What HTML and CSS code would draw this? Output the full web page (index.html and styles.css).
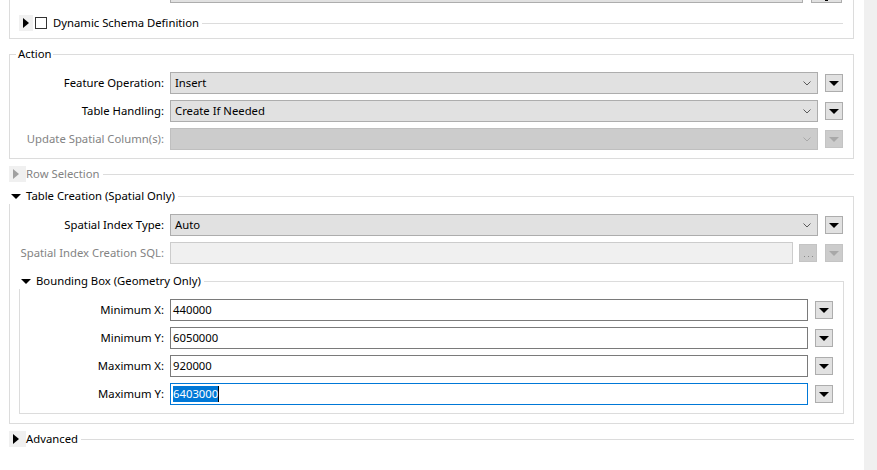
FILE: index.html
```html
<!DOCTYPE html>
<html>
<head>
<meta charset="utf-8">
<link rel="stylesheet" href="styles.css">
</head>
<body>
<div class="page">
  <div class="main">
    <div class="topbox">
      <div class="row top-row">
        <div class="lbl"></div>
        <div class="combo"></div>
        <div class="wide-btn"><span class="dot"></span></div>
      </div>
      <div class="header top-header">
        <span class="toggle small collapsed"><span class="tri-right"></span></span>
        <span class="checkbox"></span>
        <span class="htext">Dynamic Schema Definition</span>
        <span class="hline"></span>
      </div>
    </div>

    <fieldset class="group action">
      <legend class="plain-legend">Action</legend>
      <div class="body action-body">
        <div class="row">
          <div class="lbl">Feature Operation:</div>
          <div class="combo"><span class="ctext">Insert</span><svg class="chev" width="8" height="5" viewBox="0 0 8 5"><path d="M0.5 0.5 L4 4 L7.5 0.5" fill="none" stroke="#5a5a5a" stroke-width="1"/></svg></div>
          <div class="ddbtn"><span class="tri-down"></span></div>
        </div>
        <div class="row">
          <div class="lbl">Table Handling:</div>
          <div class="combo"><span class="ctext">Create If Needed</span><svg class="chev" width="8" height="5" viewBox="0 0 8 5"><path d="M0.5 0.5 L4 4 L7.5 0.5" fill="none" stroke="#5a5a5a" stroke-width="1"/></svg></div>
          <div class="ddbtn"><span class="tri-down"></span></div>
        </div>
        <div class="row">
          <div class="lbl disabled">Update Spatial Column(s):</div>
          <div class="combo combo-disabled"><span class="ctext"></span><svg class="chev" width="8" height="5" viewBox="0 0 8 5"><path d="M0.5 0.5 L4 4 L7.5 0.5" fill="none" stroke="#a8a8a8" stroke-width="1"/></svg></div>
          <div class="ddbtn ddbtn-disabled"><span class="tri-down"></span></div>
        </div>
      </div>
    </fieldset>

    <div class="header section-header">
      <span class="toggle collapsed"><span class="tri-right tri-gray"></span></span>
      <span class="htext disabled">Row Selection</span>
      <span class="hline"></span>
    </div>

    <fieldset class="group tc">
      <legend class="toggle-legend">
        <span class="toggle expanded"><span class="tri-down"></span></span>
        <span class="htext">Table Creation (Spatial Only)</span>
      </legend>
      <div class="body tc-body">
        <div class="row">
          <div class="lbl">Spatial Index Type:</div>
          <div class="combo"><span class="ctext">Auto</span><svg class="chev" width="8" height="5" viewBox="0 0 8 5"><path d="M0.5 0.5 L4 4 L7.5 0.5" fill="none" stroke="#5a5a5a" stroke-width="1"/></svg></div>
          <div class="ddbtn"><span class="tri-down"></span></div>
        </div>
        <div class="row">
          <div class="lbl disabled">Spatial Index Creation SQL:</div>
          <div class="field field-disabled"></div>
          <div class="dotsbtn"><span class="dots"></span></div>
          <div class="ddbtn ddbtn-disabled sql-dd"><span class="tri-down"></span></div>
        </div>

        <fieldset class="group bbox">
          <legend class="toggle-legend">
            <span class="toggle expanded"><span class="tri-down"></span></span>
            <span class="htext">Bounding Box (Geometry Only)</span>
          </legend>
          <div class="body bbox-body">
            <div class="row">
              <div class="lbl bl">Minimum X:</div>
              <div class="field"><span class="ftext">440000</span></div>
              <div class="ddbtn"><span class="tri-down"></span></div>
            </div>
            <div class="row">
              <div class="lbl bl">Minimum Y:</div>
              <div class="field"><span class="ftext">6050000</span></div>
              <div class="ddbtn"><span class="tri-down"></span></div>
            </div>
            <div class="row">
              <div class="lbl bl">Maximum X:</div>
              <div class="field"><span class="ftext">920000</span></div>
              <div class="ddbtn"><span class="tri-down"></span></div>
            </div>
            <div class="row">
              <div class="lbl bl">Maximum Y:</div>
              <div class="field field-focus"><span class="ftext selected">6403000</span></div>
              <div class="ddbtn"><span class="tri-down"></span></div>
            </div>
          </div>
        </fieldset>
      </div>
    </fieldset>

    <div class="header section-header advanced">
      <span class="toggle collapsed"><span class="tri-right"></span></span>
      <span class="htext">Advanced</span>
      <span class="hline"></span>
    </div>
  </div>
  <div class="scrollbar"></div>
</div>
</body>
</html>
```

FILE: styles.css
```css
html, body {
  margin: 0;
  padding: 0;
  background: #ffffff;
}

body {
  font-family: "Noto Sans", "Open Sans", sans-serif;
  font-size: 11.3px;
  line-height: 16px;
  color: #000000;
}

.page {
  display: flex;
  width: 877px;
  height: 470px;
  overflow: hidden;
}

.main {
  width: 864px;
  box-sizing: border-box;
  padding: 0 10px 0 9px;
}

.scrollbar {
  width: 13px;
  background: #f0f0f0;
}

/* top partial group */
.topbox {
  border: 1px solid #dcdcdc;
  border-top: none;
  padding: 0 0 7px 0;
}

.top-row {
  margin-top: -19px;
  padding-right: 11px;
}

.top-row .combo {
  margin-right: 8px;
}

.wide-btn {
  width: 31px;
  height: 22px;
  box-sizing: border-box;
  background: #e1e1e1;
  border: 1px solid #adadad;
  display: flex;
  justify-content: center;
  align-items: flex-end;
}

.wide-btn .dot {
  width: 3px;
  height: 2px;
  background: #000;
  margin-bottom: 1px;
}

.top-header {
  margin-top: 12px;
  padding-left: 9px;
  padding-right: 10px;
}

/* headers */
.header {
  display: flex;
  align-items: center;
  height: 16px;
}

.htext {
  white-space: nowrap;
}

.hline {
  flex: 1;
  height: 1px;
  background: #dcdcdc;
  margin-left: 3px;
}

.section-header {
  margin-top: 7px;
}

.toggle {
  display: flex;
  align-items: center;
  height: 16px;
  width: 17px;
  box-sizing: border-box;
  flex: none;
}

.toggle.collapsed {
  background: #f0f0f0;
  padding-left: 4px;
}

.toggle.expanded {
  padding-left: 2px;
  background: #ffffff;
}

.toggle.small {
  width: 14px;
  margin-right: 2px;
}

.tri-right {
  width: 0;
  height: 0;
  border-top: 5px solid transparent;
  border-bottom: 5px solid transparent;
  border-left: 6px solid #000;
}

.tri-right.tri-gray {
  border-left-color: #a0a0a0;
}

.tri-down {
  width: 0;
  height: 0;
  border-left: 5px solid transparent;
  border-right: 5px solid transparent;
  border-top: 5px solid #000;
}

.checkbox {
  width: 12px;
  height: 12px;
  box-sizing: border-box;
  border: 1px solid #333333;
  background: #fff;
  margin-right: 6px;
  flex: none;
}

.disabled {
  color: #838383;
}

/* group boxes */
fieldset.group {
  margin: 0;
  padding: 0;
  border: 1px solid #dcdcdc;
  min-width: 0;
}

legend {
  padding: 0;
  line-height: 16px;
}

.plain-legend {
  margin-left: 6px;
  padding: 0 2px;
}

.toggle-legend {
  display: flex;
  align-items: center;
  margin-left: -1px;
  padding-right: 3px;
  background: #fff;
}

fieldset.action {
  margin-top: 7px;
}

.action-body {
  padding: 10px 10px 8px 0;
}

fieldset.tc {
  margin-top: 6px;
}

.tc-body {
  padding: 10px 10px 9px 0;
}

fieldset.bbox {
  margin: 3px -1px 0 9px;
}

.bbox-body {
  padding: 10px 10px 8px 0;
}

.body {
  display: flex;
  flex-direction: column;
  gap: 6px;
}

/* rows */
.row {
  display: flex;
  align-items: center;
  height: 22px;
}

.lbl {
  width: 154px;
  margin-right: 6px;
  text-align: right;
  white-space: nowrap;
  flex: none;
}

.lbl.bl {
  width: 144px;
}

.combo {
  flex: 1;
  height: 22px;
  box-sizing: border-box;
  background: #e1e1e1;
  border: 1px solid #adadad;
  display: flex;
  align-items: center;
  padding: 0 6px 0 4px;
}

.combo .ctext {
  flex: 1;
}

.combo-disabled {
  background: #cccccc;
  border-color: #bfbfbf;
}

.chev {
  display: block;
}

.field {
  flex: 1;
  height: 22px;
  box-sizing: border-box;
  background: #ffffff;
  border: 1px solid #7a7a7a;
  display: flex;
  align-items: center;
  padding: 0 2px;
}

.field-disabled {
  background: #f0f0f0;
  border-color: #cccccc;
}

.field-focus {
  border-color: #0078d7;
}

.ftext.selected {
  background: #0078d7;
  color: #ffffff;
  border-right: 1px solid #000;
}

.ddbtn {
  width: 18px;
  height: 18px;
  box-sizing: border-box;
  margin-left: 7px;
  background: #e1e1e1;
  border: 1px solid #adadad;
  display: flex;
  align-items: center;
  justify-content: center;
  flex: none;
}

.ddbtn-disabled {
  background: #cccccc;
  border-color: #c4c4c4;
}

.ddbtn-disabled .tri-down {
  border-top-color: #a8a8a8;
}

.dotsbtn {
  width: 18px;
  height: 18px;
  box-sizing: border-box;
  margin-left: 6px;
  background: #cccccc;
  border: 1px solid #c4c4c4;
  flex: none;
  display: flex;
  justify-content: center;
  align-items: flex-end;
  padding-bottom: 4px;
}

.dots {
  width: 9px;
  height: 1px;
  background-image: linear-gradient(to right, #8a8a8a 0 1px, transparent 1px 4px, #8a8a8a 4px 5px, transparent 5px 8px, #8a8a8a 8px 9px);
}

.sql-dd {
  margin-left: 8px;
}
```
